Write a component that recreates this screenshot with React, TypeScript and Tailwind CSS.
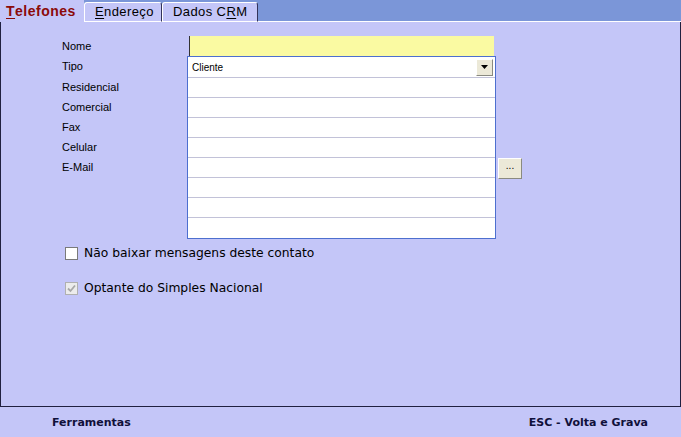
import React from "react";

const rows = ["Residencial", "Comercial", "Fax", "Celular", "E-Mail"];

function Tab({
  label,
  hot,
  active,
  width,
}: {
  label: string;
  hot: number;
  active?: boolean;
  width: string;
}) {
  const before = label.slice(0, hot);
  const key = label.slice(hot, hot + 1);
  const after = label.slice(hot + 1);
  if (active) {
    return (
      <div className="flex h-[22px] w-[84px] items-center bg-[#c4c6f8] pl-[6px] text-[14px] font-bold tracking-[0.5px] text-[#8b0a0a]">
        {before}
        <span className="underline underline-offset-2">{key}</span>
        {after}
      </div>
    );
  }
  return (
    <div
      className={`flex h-[20px] items-center rounded-tl-[3px] rounded-tr-[3px] border border-t-white border-l-white border-b-white border-r-[#33335a] bg-[#c4c6f8] pl-[10px] text-[13px] tracking-[0.4px] text-black ${width}`}
    >
      {before}
      <span className="underline underline-offset-2">{key}</span>
      {after}
    </div>
  );
}

export default function App() {
  return (
    <div className="flex h-[437px] w-[681px] flex-col bg-[#c4c6f8] font-['Liberation_Sans',Arial,sans-serif]">
      <div className="flex h-[22px] items-end bg-[#7b96d8]">
        <Tab label="Telefones" hot={0} active width="w-[84px]" />
        <Tab label="Endereço" hot={0} width="w-[78px]" />
        <Tab label="Dados CRM" hot={7} width="w-[96px]" />
        <div className="h-[1px] flex-1 bg-white" />
      </div>

      <div className="flex h-[385px] flex-col border-b border-l border-r border-[#202040] pl-[61px] pt-[14px]">
        <div className="flex">
          <div className="flex w-[125px] flex-col text-[11px] text-black">
            <div className="flex h-[20px] items-center">Nome</div>
            <div className="flex h-[21px] items-center">Tipo</div>
            {rows.map((r) => (
              <div key={r} className="flex h-[20px] items-center pt-[1px]">
                {r}
              </div>
            ))}
          </div>
          <div className="flex w-[309px] flex-col">
            <div className="ml-[2px] h-[20px] w-[305px] border-l border-[#333] bg-[#fafaa2]" />
            <div className="flex flex-col border border-[#4d6fcf] bg-white">
              <div className="flex h-[21px] items-center justify-between border-b border-[#c2c2d8] pl-[4px] pr-[2px] text-[10px] text-black">
                <span>Cliente</span>
                <div className="flex h-[17px] w-[17px] items-center justify-center border border-t-white border-l-white border-r-[#8a8a80] border-b-[#8a8a80] bg-[#ece9d8]">
                  <svg width="9" height="5" viewBox="0 0 9 5">
                    <path d="M1 0h7L4.5 4z" fill="#000" />
                  </svg>
                </div>
              </div>
              {Array.from({ length: 8 }).map((_, i) => (
                <div
                  key={i}
                  className={i < 7 ? "h-[20px] border-b border-[#c2c2d8]" : "h-[20px]"}
                />
              ))}
            </div>
          </div>
          <div className="flex flex-col pl-[2px] pt-[122px]">
            <div className="flex h-[21px] w-[24px] items-start justify-center border border-t-white border-l-white border-r-[#8a8a80] border-b-[#8a8a80] bg-[#ece9d8] text-[10px] leading-[14px] text-black">
              ...
            </div>
          </div>
        </div>

        <div className="mt-[7px] flex flex-col gap-[20px] pl-[3px] font-['DejaVu_Sans',sans-serif] text-[12.3px] leading-[15px] text-black">
          <div className="flex items-center gap-[6px]">
            <div className="h-[13px] w-[13px] border border-[#7a7a7a] bg-white" />
            <span>Não baixar mensagens deste contato</span>
          </div>
          <div className="flex items-center gap-[6px]">
            <div className="flex h-[13px] w-[13px] items-center justify-center border border-[#b0b0b0] bg-[#ececec]">
              <svg width="9" height="9" viewBox="0 0 9 9">
                <path d="M1 4.5l2.5 2.5L8 1.5" stroke="#a8a8a8" strokeWidth="1.8" fill="none" />
              </svg>
            </div>
            <span>Optante do Simples Nacional</span>
          </div>
        </div>
      </div>

      <div className="flex flex-1 items-center justify-between pl-[52px] pr-[33px] pt-[3px] font-['DejaVu_Sans',sans-serif] text-[11px] font-bold text-[#10103a]">
        <span>Ferramentas</span>
        <span>ESC - Volta e Grava</span>
      </div>
    </div>
  );
}
